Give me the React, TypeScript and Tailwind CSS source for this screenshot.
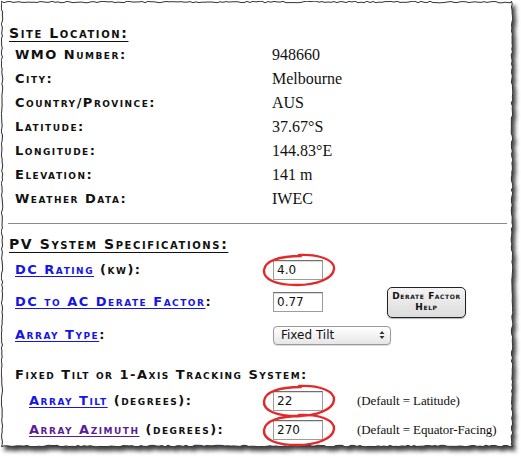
import React from 'react';

const label = "font-['DejaVu_Sans',sans-serif] font-bold [font-variant:small-caps] text-[13px] tracking-[1.5px] text-[#111] whitespace-nowrap";
const heading = "font-['DejaVu_Sans',sans-serif] font-bold [font-variant:small-caps] text-[14px] tracking-[1.6px] text-[#111] underline underline-offset-[3px] whitespace-nowrap";
const value = "font-['Liberation_Serif',serif] text-[16px] text-[#111] whitespace-nowrap";
const note = "font-['Liberation_Serif',serif] text-[13px] tracking-[-0.1px] text-[#111] whitespace-nowrap shrink-0";
const link = "underline underline-offset-[2px] text-[#1515e8]";

const siteRows: [string, string][] = [
  ['WMO Number:', '948660'],
  ['City:', 'Melbourne'],
  ['Country/Province:', 'AUS'],
  ['Latitude:', '37.67°S'],
  ['Longitude:', '144.83°E'],
  ['Elevation:', '141 m'],
  ['Weather Data:', 'IWEC'],
];

// torn paper outline: small seeded wobble along each side
function tornEdge(w: number, h: number) {
  let seed = 7;
  const rnd = () => {
    seed = (seed * 16807) % 2147483647;
    return (seed / 2147483647) * 1.6 - 0.8;
  };
  const pts: string[] = [];
  for (let x = 0; x <= w; x += 3) pts.push(`${x},${(1 + rnd()).toFixed(1)}`);
  for (let y = 0; y <= h; y += 3) pts.push(`${(w - 1 + rnd()).toFixed(1)},${y}`);
  for (let x = w; x >= 0; x -= 3) pts.push(`${x},${(h - 1 + rnd()).toFixed(1)}`);
  for (let y = h; y >= 0; y -= 3) pts.push(`${(1 + rnd()).toFixed(1)},${y}`);
  return pts.join(' ');
}

const PAPER_W = 512;
const PAPER_H = 446;
const edge = tornEdge(PAPER_W, PAPER_H);

// hand-drawn red circle around a field
const Circle: React.FC = () => (
  <svg
    className="absolute left-[-12px] top-[-8px] pointer-events-none"
    width="76"
    height="36"
    viewBox="0 0 76 36"
  >
    <path
      d="M38 3 C58 2 74 8 73 17 C72 27 55 33 36 33 C16 33 2 28 3 18 C4 9 18 4 40 4"
      fill="none"
      stroke="#e22a2a"
      strokeWidth="2.4"
      strokeLinecap="round"
    />
  </svg>
);

const Field: React.FC<{ val: string; circled?: boolean }> = ({ val, circled }) => (
  <div className="relative w-[50px] h-[20px] shrink-0">
    <div className="w-full h-full border border-[#9c9c9c] border-t-[#6f6f6f] bg-white shadow-[inset_0_1px_1px_rgba(0,0,0,0.15)] flex items-center pl-[3px] font-['DejaVu_Sans',sans-serif] text-[12px] text-[#111]">
      {val}
    </div>
    {circled && <Circle />}
  </div>
);

export default function App() {
  return (
    <div className="w-[521px] h-[461px] bg-white overflow-hidden pl-[1px] pt-[1px]">
      <div className="relative w-[512px] h-[446px]">
        <svg
          className="absolute inset-0 drop-shadow-[3px_4px_2px_rgba(0,0,0,0.75)]"
          width={PAPER_W}
          height={PAPER_H}
          viewBox={`0 0 ${PAPER_W} ${PAPER_H}`}
        >
          <polygon points={edge} fill="#fff" stroke="#333" strokeWidth="1" />
        </svg>

        <div className="relative pt-[22px] pl-[2px]">
          <div className="pl-[6px] h-[20px] flex items-center">
            <span className={heading}>Site Location:</span>
          </div>

          <div className="pl-[12px]">
            {siteRows.map(([k, v]) => (
              <div key={k} className="h-[24px] flex items-center">
                <span className={`${label} w-[257px]`}>{k}</span>
                <span className={value}>{v}</span>
              </div>
            ))}
          </div>

          <div className="ml-[5px] mr-[6px] mt-[12px] border-t border-[#8a8a8a]" />

          <div className="pl-[6px] mt-[10px] h-[20px] flex items-center">
            <span className={heading}>PV System Specifications:</span>
          </div>

          <div className="pl-[12px]">
            <div className="h-[32px] flex items-center">
              <span className={`${label} w-[258px]`}>
                <span className={link}>DC Rating</span> (kw):
              </span>
              <Field val="4.0" circled />
            </div>

            <div className="h-[32px] flex items-center">
              <span className={`${label} w-[258px]`}>
                <span className={link}>DC to AC Derate Factor</span>:
              </span>
              <Field val="0.77" />
              <button className="ml-[64px] w-[79px] h-[31px] shrink-0 rounded-[5px] border-[1.5px] border-[#222] bg-gradient-to-b from-[#f4f4f4] to-[#dcdcdc] shadow-[0_1px_1px_rgba(0,0,0,0.3)] font-['DejaVu_Sans',sans-serif] font-bold [font-variant:small-caps] text-[9px] leading-[11px] tracking-[0.6px] text-[#111]">
                Derate Factor
                <br />
                Help
              </button>
            </div>

            <div className="h-[34px] flex items-center">
              <span className={`${label} w-[258px]`}>
                <span className={link}>Array Type</span>:
              </span>
              <div className="w-[118px] h-[19px] shrink-0 rounded-[4px] border border-[#9a9a9a] bg-gradient-to-b from-white to-[#e6e6e6] shadow-[0_1px_1px_rgba(0,0,0,0.15)] flex items-center justify-between pl-[7px] pr-[5px] font-['DejaVu_Sans',sans-serif] text-[12px] text-[#111]">
                <span>Fixed Tilt</span>
                <svg width="6" height="10" viewBox="0 0 6 10">
                  <path d="M0.5 4 L3 1 L5.5 4 Z M0.5 6 L3 9 L5.5 6 Z" fill="#333" />
                </svg>
              </div>
            </div>
          </div>

          <div className="pl-[12px] mt-[13px] h-[20px] flex items-center">
            <span className={label}>Fixed Tilt or 1-Axis Tracking System:</span>
          </div>

          <div className="pl-[26px]">
            <div className="h-[32px] flex items-center">
              <span className={`${label} w-[244px]`}>
                <span className={link}>Array Tilt</span> (degrees):
              </span>
              <Field val="22" circled />
              <span className={`${note} ml-[34px]`}>(Default = Latitude)</span>
            </div>
            <div className="h-[26px] flex items-center">
              <span className={`${label} w-[244px]`}>
                <span className={`${link} !text-[#5a1d96]`}>Array Azimuth</span> (degrees):
              </span>
              <Field val="270" circled />
              <span className={`${note} ml-[34px]`}>(Default = Equator-Facing)</span>
            </div>
          </div>
        </div>
      </div>
    </div>
  );
}
